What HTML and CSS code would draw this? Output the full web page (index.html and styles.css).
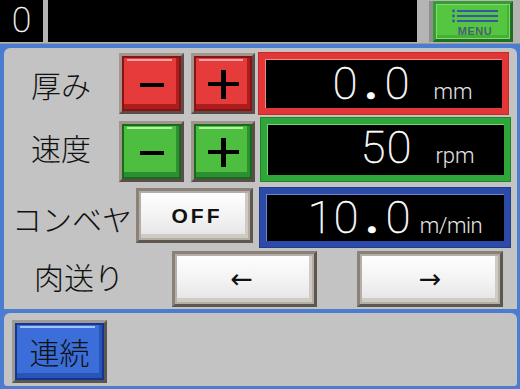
FILE: index.html
```html
<!DOCTYPE html>
<html lang="ja">
<head>
<meta charset="utf-8">
<title>HMI</title>
<link rel="stylesheet" href="styles.css">
</head>
<body>
<div class="screen">
  <header class="top">
    <div class="cell cell-id">0</div>
    <div class="cell cell-msg"></div>
    <div class="menu">
      <svg class="menu-icon" width="47" height="14" viewBox="0 0 47 14">
        <circle cx="1.5" cy="2" r="1.4" fill="#3a54a8"/>
        <circle cx="1.5" cy="7" r="1.4" fill="#3a54a8"/>
        <circle cx="1.5" cy="12" r="1.4" fill="#3a54a8"/>
        <rect x="5" y="1" width="41" height="2" fill="#3a54a8"/>
        <rect x="5" y="6" width="41" height="2" fill="#3a54a8"/>
        <rect x="5" y="11" width="41" height="2" fill="#3a54a8"/>
      </svg>
      <span class="menu-text">MENU</span>
    </div>
  </header>

  <main class="panel">
    <div class="row r1">
      <div class="label l1">厚み</div>
      <div class="key red k-minus"><span class="minus"></span></div>
      <div class="key red k-plus"><span class="plus"></span></div>
      <div class="disp disp-red d1">
        <span class="num"><span class="ch">0</span><span class="ch dot">.</span><span class="ch">0</span></span>
        <span class="unit">mm</span>
      </div>
    </div>

    <div class="row r2">
      <div class="label l2">速度</div>
      <div class="key green k-minus k-low"><span class="minus"></span></div>
      <div class="key green k-plus k-low"><span class="plus"></span></div>
      <div class="disp disp-green d2">
        <span class="num"><span class="ch">5</span><span class="ch">0</span></span>
        <span class="unit">rpm</span>
      </div>
    </div>

    <div class="row r3">
      <div class="label l3">コンベヤ</div>
      <div class="key white k-off">OFF</div>
      <div class="disp disp-blue d3">
        <span class="num"><span class="ch">1</span><span class="ch">0</span><span class="ch dot">.</span><span class="ch">0</span></span>
        <span class="unit">m/min</span>
      </div>
    </div>

    <div class="row r4">
      <div class="label l4">肉送り</div>
      <div class="key white k-arrow k-left">←</div>
      <div class="key white k-arrow k-right">→</div>
    </div>
  </main>

  <section class="panel2">
    <div class="key blue k-renzoku">連続</div>
  </section>
</div>
</body>
</html>
```

FILE: styles.css
```css
html, body {
  margin: 0;
  padding: 0;
}
body {
  width: 520px;
  height: 389px;
  overflow: hidden;
  background: #4a7ccf;
  font-family: "Noto Sans CJK JP", "Noto Sans", sans-serif;
}
.screen {
  width: 520px;
  height: 389px;
  display: flex;
  flex-direction: column;
}

/* top bar */
.top {
  height: 44px;
  background: #b4b4b4;
  display: flex;
  align-items: flex-start;
  box-shadow: inset 0 -1px 0 #9a9a9a;
}
.cell {
  height: 42px;
  background: #000;
  box-sizing: border-box;
}
.cell-id {
  width: 43px;
  color: #fff;
  font-family: Roboto, "Liberation Sans", sans-serif;
  font-weight: 100;
  font-size: 35px;
  line-height: 42px;
  text-align: center;
  -webkit-text-stroke: 0.4px #fff;
}
.cell-msg {
  width: 369px;
  margin-left: 5px;
}
.menu {
  box-sizing: border-box;
  width: 80px;
  height: 41px;
  margin-left: 16px;
  margin-top: 1px;
  background: #54c640;
  border: 3px solid #2a8a2a;
  border-color: #3a9a36 #1f6e22 #1f6e22 #3a9a36;
  box-shadow: inset 0 0 0 1px #7edc6c, inset -2px -3px 0 1px #46b036, -4px 0 0 #8e8e8e;
  display: flex;
  flex-direction: column;
  align-items: center;
  padding-top: 5px;
  padding-left: 4px;
}
.menu-icon {
  display: block;
}
.menu-text {
  margin-top: 3px;
  font-family: "Liberation Sans", Arial, sans-serif;
  font-size: 11px;
  font-weight: bold;
  line-height: 10px;
  letter-spacing: 0.5px;
  color: #4a6070;
}

/* main panel */
.panel {
  box-sizing: border-box;
  height: 261px;
  margin: 4px 3px 0 4px;
  background: #c3c3c3;
  border-radius: 6px 6px 0 0;
  padding-top: 5px;
}
.row {
  display: flex;
  align-items: flex-start;
}
.r1 { height: 61px; }
.r2 { height: 64px; margin-top: 4px; }
.r3 { height: 59px; margin-top: 6px; }
.r4 { height: 56px; margin-top: 4px; }

.label {
  box-sizing: border-box;
  align-self: stretch;
  display: flex;
  align-items: center;
  justify-content: center;
  font-size: 30px;
  font-weight: 300;
  color: #111;
  white-space: nowrap;
}
.l1 { width: 114px; padding-top: 1px; }
.l2 { width: 114px; padding-bottom: 7px; }
.l3 { width: 132px; padding-left: 4px; }
.l4 { width: 150px; padding-bottom: 7px; }

/* keys */
.key {
  box-sizing: border-box;
  position: relative;
  display: flex;
  align-items: center;
  justify-content: center;
  border: 3px solid;
  border-color: #a4948e #5a4c48 #5a4c48 #a4948e;
}
.key::before {
  content: "";
  position: absolute;
  top: 3px;
  left: 5px;
  right: 9px;
  height: 2px;
}
.red {
  background: #e63b3b;
  box-shadow: inset 0 0 0 2px #861414, inset -3px -5px 0 2px #ae1c1c;
}
.red::before { background: #f8a4a4; }
.green {
  background: #4dbe3f;
  box-shadow: inset 0 0 0 2px #1a6a1e, inset -3px -5px 0 2px #2a9030;
}
.green::before { background: #b4f0a4; }
.blue {
  background: #3b6ed8;
  box-shadow: inset 0 0 0 2px #16358c, inset -3px -5px 0 2px #2a55b8;
}
.blue::before { background: #a0c2f8; }
.white {
  border-color: #8a8279 #5e5750 #5e5750 #8a8279;
  background: linear-gradient(#ffffff, #f2f2f2 55%, #e2e2e2);
  box-shadow: inset 0 0 0 2px #b4aea6, inset -3px -4px 0 2px #cfcac4;
}
.white::before { display: none; }

.k-minus {
  width: 65px;
  height: 61px;
  margin-left: 1px;
}
.k-plus {
  width: 64px;
  height: 61px;
  margin-left: 7px;
}
.k-low { align-self: flex-end; }

.minus {
  display: block;
  width: 24px;
  height: 4px;
  background: #000;
  margin-top: 2px;
}
.plus {
  display: block;
  position: relative;
  width: 31px;
  height: 29px;
  margin-top: 2px;
}
.plus::before, .plus::after {
  content: "";
  position: absolute;
  background: #000;
}
.plus::before { left: 0; top: 12px; width: 31px; height: 4px; }
.plus::after { left: 13px; top: 0; width: 5px; height: 29px; }

.k-off {
  width: 117px;
  height: 55px;
  font-family: "Liberation Sans", Arial, sans-serif;
  font-weight: bold;
  font-size: 21px;
  letter-spacing: 3px;
  padding-left: 5px;
  color: #111;
}
.k-arrow {
  width: 145px;
  height: 56px;
  font-family: "DejaVu Sans", sans-serif;
  font-size: 27px;
  color: #111;
  padding-bottom: 2px;
}
.k-left { margin-left: 18px; padding-right: 6px; }
.k-right { margin-left: 40px; width: 146px; }

/* displays */
.disp {
  box-sizing: border-box;
  background: #000;
  border: 6px solid;
  display: flex;
  align-items: baseline;
  color: #fff;
  font-family: Roboto, "Liberation Sans", sans-serif;
  font-weight: 100;
}
.disp-red {
  border-color: #e33636;
  box-shadow: 0 0 0 1px #c42a2a, inset 1px 1px 0 #f08a8a;
}
.disp-green {
  border-color: #2fa63a;
  box-shadow: 0 0 0 1px #1e8628, inset 1px 1px 0 #7ad07e;
}
.disp-blue {
  border-color: #2c4aa8;
  box-shadow: 0 0 0 1px #223c8c, inset 1px 1px 0 #6a86d4;
}
.d1 { width: 249px; height: 61px; margin-left: 4px; padding-top: 1px; }
.d2 { width: 249px; height: 63px; margin-left: 6px; }
.d3 { width: 250px; height: 59px; margin-left: 7px; }

.num {
  width: 145px;
  display: flex;
  justify-content: flex-end;
  font-size: 45px;
  line-height: 48px;
  font-weight: 100;
  -webkit-text-stroke: 0.6px #fff;
}
.ch {
  display: inline-block;
  width: 26px;
  text-align: center;
}
.dot { font-weight: 700; }
.unit {
  width: 72px;
  margin-left: 7px;
  text-align: center;
  font-size: 22px;
  font-weight: 300;
  color: #e6e6e6;
}
.d3 .unit { margin-left: 4px; letter-spacing: -0.5px; }

/* bottom panel */
.panel2 {
  box-sizing: border-box;
  height: 73px;
  margin: 4px 3px 0 4px;
  background: #c3c3c3;
  border-radius: 6px 6px 3px 3px;
  padding: 7px 0 0 8px;
}
.k-renzoku {
  width: 95px;
  height: 63px;
  border-color: #a09a96 #5c5652 #5c5652 #a09a96;
  font-size: 30px;
  font-weight: 300;
  color: #111;
  padding-bottom: 2px;
}
```
